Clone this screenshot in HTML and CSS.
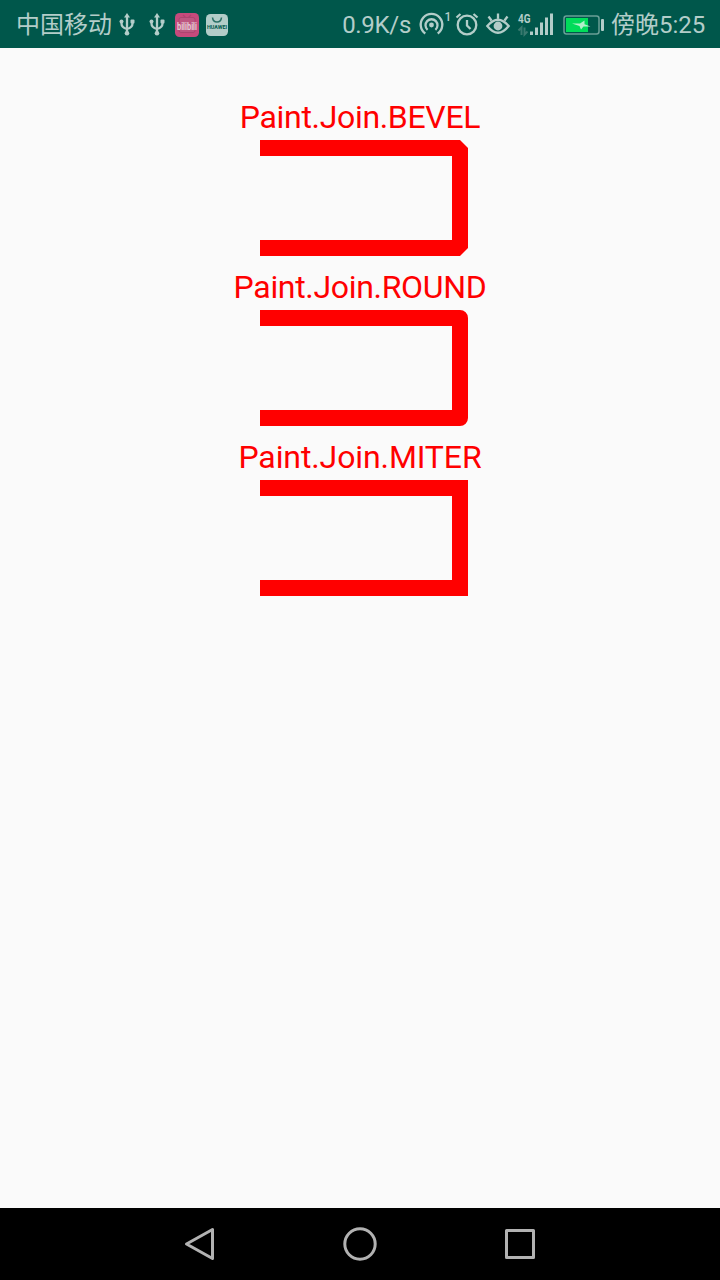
FILE: index.html
```
<!DOCTYPE html>
<html lang="zh">
<head>
  <meta charset="UTF-8">
  <meta name="viewport" content="width=device-width, initial-scale=1.0">
  <title>Paint.Join</title>
  <link rel="stylesheet" href="styles.css">
</head>
<body>
  <header class="status-bar">
    <div class="status-left">
      <span class="carrier">中国移动</span>
      <svg class="usb" width="16" height="24" viewBox="0 0 16 24">
        <path class="line" d="M8 4v17M2.500 9v2.500q0 4 5.500 5.500q5.500-1.500 5.500-5.500V9"/>
        <path class="fill" d="M8 1l3 4.500H5z"/>
        <circle class="fill" cx="2.500" cy="9.500" r="2"/>
        <rect class="fill" x="11.500" y="7.500" width="4" height="4" rx="1"/>
        <circle class="fill" cx="8" cy="21.200" r="2.300"/>
      </svg>
      <svg class="usb" width="16" height="24" viewBox="0 0 16 24">
        <path class="line" d="M8 4v17M2.500 9v2.500q0 4 5.500 5.500q5.500-1.500 5.500-5.500V9"/>
        <path class="fill" d="M8 1l3 4.500H5z"/>
        <circle class="fill" cx="2.500" cy="9.500" r="2"/>
        <rect class="fill" x="11.500" y="7.500" width="4" height="4" rx="1"/>
        <circle class="fill" cx="8" cy="21.200" r="2.300"/>
      </svg>
      <svg class="bili" width="24" height="24" viewBox="0 0 24 24">
        <rect width="24" height="24" rx="4.500" fill="#c64a7c"/>
        <path d="M8 2l3 3M16 2l-3 3" stroke="#ad4470" stroke-width="1.200"/>
        <rect x="4" y="4.500" width="16" height="15" rx="2" fill="#be5681" stroke="#ad4470"/>
        <text x="2" y="16.500" textLength="20" lengthAdjust="spacingAndGlyphs">bilibili</text>
      </svg>
      <svg class="huawei" width="22" height="22" viewBox="0 0 22 22">
        <rect width="22" height="22" rx="4.500" fill="#b3cdc9"/>
        <path d="M6.500 3.500q.5 4.500 4.500 4.500t4.500-4.500" fill="none" stroke="#2a7066" stroke-width="1.600"/>
        <text x="1" y="15" textLength="20" lengthAdjust="spacingAndGlyphs">HUAWEI</text>
      </svg>
    </div>
    <div class="status-right">
      <span class="speed">0.9K/s</span>
      <svg class="hotspot" width="32" height="26" viewBox="0 0 32 26">
        <path class="line" d="M6.300 22.500A10.800 10.800 0 1 1 18.700 22.500M8.600 18.800A6 6 0 1 1 16.400 18.800"/>
        <circle class="fill" cx="12.500" cy="14" r="2.400"/>
        <text x="25.500" y="10">1</text>
      </svg>
      <svg class="alarm" width="24" height="24" viewBox="0 0 24 24">
        <circle class="line" cx="12" cy="13" r="9.300"/>
        <path class="line" d="M12 8v5.500l3.500 3.500M1.500 5.500l4-3.500M22.500 5.500l-4-3.500"/>
      </svg>
      <svg class="eye" width="24" height="24" viewBox="0 0 24 24">
        <path class="line" d="M1.300 14Q12 1.500 22.700 14Q12 27.500 1.300 14zM12 1.500v5M2.500 4.500l3 4M21.500 4.500l-3 4"/>
        <circle class="fill" cx="12" cy="14" r="4.400"/>
      </svg>
      <svg class="signal" width="36" height="24" viewBox="0 0 36 24">
        <text x="0" y="11" textLength="12.500" lengthAdjust="spacingAndGlyphs">4G</text>
        <path class="dim" d="M.5 18.500L3.500 15.500v7.500M6.500 15.500v7l3-3"/>
        <path class="bars" d="M13.500 23v-3.500M18.500 23v-7.500M23.500 23V10.500M28.500 23V5.500M33.500 23V1.500"/>
      </svg>
      <svg class="battery" width="42" height="20" viewBox="0 0 42 20">
        <rect x="1" y="1" width="35" height="18" rx="2.500" fill="none" stroke="#6a9f97" stroke-width="1.500"/>
        <rect x="3" y="3" width="22" height="14" fill="#00dc5a"/>
        <path d="M9 8.500L17 8.500L21.500 5.500L21.500 9.200L27.500 11.500L20.500 11.500L18 14.500L16.500 11z" fill="#b3efcb"/>
        <rect class="fill" x="38" y="4" width="3" height="12" rx="1"/>
      </svg>
      <span class="clock">傍晚5:25</span>
    </div>
  </header>

  <main class="content">
    <section class="join">
      <h2>Paint.Join.BEVEL</h2>
      <svg width="208" height="116" viewBox="0 0 208 116">
        <path class="shape bevel" d="M0 8H200V108H0"/>
      </svg>
    </section>
    <section class="join">
      <h2>Paint.Join.ROUND</h2>
      <svg width="208" height="116" viewBox="0 0 208 116">
        <path class="shape round" d="M0 8H200V108H0"/>
      </svg>
    </section>
    <section class="join">
      <h2 class="miter-title">Paint.Join.MITER</h2>
      <svg width="208" height="116" viewBox="0 0 208 116">
        <path class="shape miter" d="M0 8H200V108H0"/>
      </svg>
    </section>
  </main>

  <nav class="nav-bar">
    <svg width="36" height="36" viewBox="0 0 36 36"><path d="M30.500 3.500v29L4.500 18z"/></svg>
    <svg width="36" height="36" viewBox="0 0 36 36"><circle cx="18" cy="18" r="15.200"/></svg>
    <svg width="36" height="36" viewBox="0 0 36 36"><rect x="4.500" y="4.500" width="27" height="27"/></svg>
  </nav>
</body>
</html>
```
FILE: styles.css
```
* {
  margin: 0;
  padding: 0;
  box-sizing: border-box;
}

body {
  font-family: Roboto, "Noto Sans CJK SC", sans-serif;
  background-color: #fafafa;
  height: 100vh;
  display: flex;
  flex-direction: column;
  overflow: hidden;
}

svg {
  display: block;
  flex: none;
  overflow: visible;
}

/* status bar */
.status-bar {
  height: 48px;
  background-color: #00574b;
  color: #b3cdc9;
  display: flex;
  justify-content: space-between;
  padding: 0 15px 0 16px;
  font-size: 24px;
  line-height: 46px;
  white-space: nowrap;
}

.status-left,
.status-right {
  display: flex;
  align-items: center;
}

.carrier,
.clock {
  padding-top: 2px;
}

.carrier {
  width: 96px;
}

.clock {
  width: 94px;
}

.speed {
  padding-top: 2px;
  letter-spacing: -0.3px;
}

.line {
  fill: none;
  stroke: #b3cdc9;
  stroke-width: 2.3;
}

.fill {
  fill: #b3cdc9;
}

.usb {
  margin-left: 7px;
}

.usb + .usb {
  margin-left: 14px;
}

.bili {
  margin: 2px 0 0 10px;
}

.bili text {
  font-size: 10px;
  font-weight: bold;
  fill: #e6cbd6;
}

.huawei {
  margin: 2px 0 0 7px;
}

.huawei text {
  font-size: 6px;
  font-weight: bold;
  fill: #00574b;
}

.hotspot {
  margin-left: 8px;
}

.hotspot text {
  font-size: 12px;
  font-weight: 500;
  fill: #b3cdc9;
}

.alarm {
  margin-left: 4px;
}

.eye {
  margin-left: 7px;
}

.signal {
  margin-left: 8px;
}

.signal text {
  font-size: 13px;
  font-weight: bold;
  fill: #b3cdc9;
}

.dim {
  fill: none;
  stroke: #39796f;
  stroke-width: 2;
}

.bars {
  stroke: #b3cdc9;
  stroke-width: 3;
}

.battery {
  margin: 2px 6px 0 9px;
}

/* drawings */
.content {
  flex: 1;
  padding-top: 51px;
}

.join {
  display: flex;
  flex-direction: column;
  align-items: center;
  height: 170px;
}

.join h2 {
  height: 41px;
  line-height: 37px;
  font-size: 32px;
  font-weight: 400;
  letter-spacing: -0.32px;
  color: #f00;
}

.join .miter-title {
  letter-spacing: -0.1px;
}

.join svg {
  margin-left: 8px;
}

.shape {
  fill: none;
  stroke: #f00;
  stroke-width: 16;
}

.bevel {
  stroke-linejoin: bevel;
}

.round {
  stroke-linejoin: round;
}

.miter {
  stroke-linejoin: miter;
}

/* navigation bar */
.nav-bar {
  height: 72px;
  background-color: #000;
  display: flex;
  justify-content: center;
  align-items: center;
  gap: 124px;
}

.nav-bar svg {
  fill: none;
  stroke: #b2b2b2;
  stroke-width: 3;
  stroke-linejoin: round;
}
```
